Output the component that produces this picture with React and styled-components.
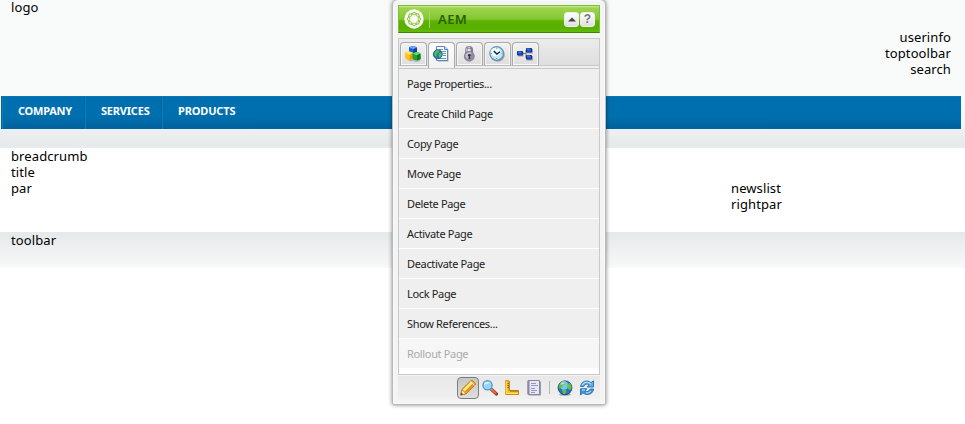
import React from "react";
import styled, { createGlobalStyle, css } from "styled-components";

const GlobalStyle = createGlobalStyle`
  * { box-sizing: border-box; }
  body {
    margin: 0;
    background: #fff;
    color: #000;
    font: 13px/16px "Noto Sans", "Open Sans", sans-serif;
    letter-spacing: 0.1px;
    overflow: hidden;
  }
`;

const Page = styled.div`
  position: relative;
  height: 424px;
  overflow: hidden;
`;

const Header = styled.header`
  height: 96px;
  padding: 0 14px 0 11px;
  background: #f9fbfa;
  display: flex;
  justify-content: space-between;
`;

const Logo = styled.div`
  line-height: 14px;
`;

const UserTools = styled.div`
  padding-top: 29px;
  text-align: right;
`;

const NavBand = styled.div`
  height: 52px;
  padding: 0 4px 0 1px;
  background: linear-gradient(#f9fbfa 0, #f4f5f6 28px, #eeeff1 33px, #e6eaeb 50px, #e9edee);
`;

const Nav = styled.nav`
  display: flex;
  height: 33px;
  border-top: 1px solid #0878b4;
  border-left: 1px solid #0767a4;
  background: linear-gradient(#006faf 0, #006fae 20px, #00629e 31px, #00649f);
`;

const NavItem = styled.a`
  width: ${(p) => p.$width}px;
  padding-left: 15px;
  border-left: 1px solid #0a7dbd;
  box-shadow: -1px 0 #0064a0;
  color: #fff;
  font: bold 11px/28px "Noto Sans", sans-serif;
  letter-spacing: ${(p) => p.$spacing}px;
`;

const Content = styled.main`
  height: 84px;
  padding-left: 11px;
  display: grid;
  grid-template-columns: 720px 1fr;
`;

const RightColumn = styled.aside`
  padding-top: 32px;
`;

const Footer = styled.footer`
  height: 36px;
  padding-left: 11px;
  background: linear-gradient(#e5e9ea, #eff1f2 55%, #f8f9f9);
`;

const Sidekick = styled.section`
  position: absolute;
  left: 392px;
  top: -1px;
  width: 214px;
  height: 406px;
  padding: 5px;
  border: 1px solid #b8b8b8;
  border-radius: 6px 6px 2px 2px;
  background: #f4f4f4;
  box-shadow: 0 0 4px rgba(0, 0, 0, 0.48), inset 0 0 0 1px #fafafa;
  display: flex;
  flex-direction: column;
  font: 11px/14px "Noto Sans", sans-serif;
  letter-spacing: 0;
`;

const TitleBar = styled.div`
  flex: none;
  height: 28px;
  padding: 0 4px 0 5px;
  border: 1px solid #7dbd42;
  border-bottom-color: #3f8300;
  background: linear-gradient(#caed91 0, #9ed44e 2px, #84c832 13px, #5db300 15px, #59ae00 22px, #62bd0a 100%);
  display: flex;
  align-items: center;
`;

const Title = styled.h1`
  flex: 1;
  margin: 0 0 0 5px;
  padding-left: 8px;
  border-left: 1px solid #a3d66a;
  color: #2a6100;
  font: 600 13px/17px "Noto Sans", sans-serif;
  letter-spacing: 0.4px;
`;

const TitleButton = styled.button`
  width: 15px;
  height: 15px;
  margin-left: 1px;
  padding: 0;
  border: 1px solid #efefef;
  border-radius: 3px;
  background: linear-gradient(#fff, #e0e0e0);
  color: #777;
  display: grid;
  place-items: center;
  font: bold 12px/13px "Liberation Sans", sans-serif;
`;

const Body = styled.div`
  flex: none;
  height: 337px;
  margin-top: 5px;
  border: 1px solid #c9c9c9;
  background: #fff;
`;

const TabStrip = styled.div`
  height: 30px;
  padding: 3px 1px 0;
  border-bottom: 1px solid #c9c9c9;
  background: linear-gradient(#ececec 0, #dedede 26px, #c9c9c9 26px, #c9c9c9 27px, #efefef 27px);
  display: flex;
  gap: 1px;
`;

const Tab = styled.button`
  width: 27px;
  height: 24px;
  padding: 0 2px 0 0;
  border: 1px solid #aaa;
  border-bottom: 1px solid #bbb;
  border-radius: 4px 4px 0 0;
  background: linear-gradient(#f2f2f2, #dedede);
  box-shadow: inset 0 0 0 1px #f7f7f7;
  display: grid;
  place-items: center;
  ${(p) =>
    p.$active &&
    css`
      height: 26px;
      padding-bottom: 3px;
      border-bottom: 0;
      background: linear-gradient(#fff, #f1f1f1);
      box-shadow: none;
    `}
`;

const MenuItem = styled.div`
  height: 30px;
  padding: 8px 0 0 8px;
  border-bottom: 1px solid #fff;
  background: ${(p) => (p.$disabled ? "#f6f6f6" : "#efefef")};
  color: ${(p) => (p.$disabled ? "#aaa" : "#222")};
  letter-spacing: -0.34px;
  white-space: nowrap;
`;

const ToolRow = styled.div`
  flex: none;
  height: 23px;
  margin-top: 1px;
  padding-right: 2px;
  background: linear-gradient(#e8e8e8, #f0f0f0);
  display: flex;
  justify-content: flex-end;
  align-items: center;
`;

const Tool = styled.button`
  width: 22px;
  height: 22px;
  padding: 0;
  border: 1px solid ${(p) => (p.$active ? "#7c7c7c" : "transparent")};
  border-radius: 4px;
  background: ${(p) => (p.$active ? "linear-gradient(#c6c6c6, #dedede)" : "none")};
  display: grid;
  place-items: center;
`;

const Divider = styled.i`
  width: 1px;
  height: 13px;
  margin: 0 4px;
  background: #b5b5b5;
`;

const Icon = styled.svg`
  display: block;
  overflow: visible;
`;

const Svg = ({ size = 16, children }) => (
  <Icon width={size} height={size} viewBox="0 0 16 16" fill="none">
    {children}
  </Icon>
);

const Cube = ({ x, y, top, left, right }) => (
  <g transform={`translate(${x} ${y})`}>
    <path d="M0 1.800Q0 .8 1 .8L4 0 7 .8Q8 1 8 2v4.500Q7.500 7.800 4 8.500.5 8 0 6.500Z" fill={left} />
    <path d="M.3 1.500 4 0l3.700 1.500L4.200 3.300Z" fill={top} />
    <path d="M4.500 3.300 8 1.800v4.500Q7 8 4.500 8.500Z" fill={right} />
  </g>
);

const CubesIcon = () => (
  <Svg>
    <path d="M2 13.500 9 11l7 1-1 3.300-4 .7-3-1-3 .2Z" fill="#999" opacity=".6" />
    <Cube x={4} y={0} top="#6ba4f4" left="#1f5fd8" right="#123fa6" />
    <Cube x={0.2} y={5.5} top="#ffe86b" left="#ffc40f" right="#e79a00" />
    <Cube x={7.5} y={6} top="#6edb62" left="#20a535" right="#0b7a20" />
  </Svg>
);

const PageIcon = () => (
  <Svg>
    <path d="M5 2h8.500L15.500 4v11.500H5Z" fill="#8a8a8a" opacity=".7" />
    <path d="M3.500.5h8.200L14.500 3v11.500h-11Z" fill="#f8fbff" stroke="#5f87b4" />
    <path d="M11.500.5V3.500h3" fill="#cddff2" stroke="#5f87b4" />
    <path d="M6 3.500h4M9 5.500h4M10 7.500h3M10 9.500h3M6 12.500h7" stroke="#6b92c0" />
    <circle cx="4.800" cy="8.200" r="4.500" fill="#2677bd" stroke="#165592" strokeWidth=".8" />
    <path d="m1.500 6.500 2-2.200 3 .2-.8 2-2 1-.2 3.500-2-1.500ZM6 7l2.500-.2.2 2.700-2 2.500-1-2Z" fill="#4fc23f" />
  </Svg>
);

const LockIcon = () => (
  <Svg>
    <path d="M5.300 7V4a2.800 2.800 0 0 1 5.600 0v3" stroke="#817c92" strokeWidth="2.400" />
    <path d="M5.300 6V4a2.800 2.800 0 0 1 4-2.500" stroke="#d2cedc" />
    <circle cx="8.300" cy="10.200" r="5" fill="#918ca2" stroke="#777286" strokeWidth=".7" />
    <path d="M4.300 9q2-3.500 6-2.500L8 13q-3 .5-3.700-4Z" fill="#c4c0d1" />
    <circle cx="8.300" cy="9.300" r="1.400" fill="#383341" />
    <path d="m8.300 9.300-1.200 3.500h2.400Z" fill="#383341" />
  </Svg>
);

const ClockIcon = () => (
  <Svg>
    <circle cx="8.800" cy="8.800" r="7" fill="#909090" opacity=".8" />
    <circle cx="7.700" cy="7.500" r="6.800" fill="#bde7f8" stroke="#6595ad" strokeWidth="1.300" />
    <ellipse cx="6.500" cy="6" rx="5" ry="4.200" fill="#eefbff" />
    <path d="m4.800 5 3 3L11 5.700" stroke="#17262f" strokeWidth="1.400" />
    <path d="M7.700 1.800v1M7.700 12v1M2 7.500h1M12.500 7.500h1" stroke="#599bb9" />
  </Svg>
);

const FlowIcon = () => (
  <Svg>
    <path d="M5 7.500h4V4h2M9 7.500V12h2" stroke="#777" />
    <path d="M1 6h5.500v4.500H1ZM9.500 3H16v4.500H9.500ZM9.500 10H16v4.500H9.500Z" fill="#777" opacity=".6" />
    <path d="M.5 5.500h5v3.500h-5ZM9.500 2.500h5V6h-5ZM9.500 9.500h5V13h-5Z" fill="#2056db" stroke="#142c84" />
    <path d="M1 6h3M10 3h3M10 10h3" stroke="#4587fa" />
  </Svg>
);

const PencilIcon = () => (
  <Svg>
    <path d="m.7 15 1.200-5.500L10.500 1q1.200-1.200 2.700.1l1.700 1.700q1.100 1.300-.2 2.500L6 13.800Z" fill="#f6b62a" stroke="#b97416" />
    <path d="m3 9.500 8-8 2 1.800-8 8Z" fill="#ffe97c" />
    <path d="m5 11.500 8-8 1.200 1.200L6 13Z" fill="#e98b18" />
    <path d="m.8 15 1.300-5L6 13.600Z" fill="#fff0ca" stroke="#b97416" strokeWidth=".6" />
    <path d="m.8 15 .6-2.500L3 14.300Z" fill="#3c301d" />
    <path d="m10.200 1.400 4 4" stroke="#fff5d5" />
  </Svg>
);

const SearchIcon = () => (
  <Svg>
    <path d="m9 9 5.500 5" stroke="#9a3b20" strokeWidth="3.200" strokeLinecap="round" />
    <path d="m9 9 5 4.500" stroke="#f26a36" strokeWidth="1.700" />
    <path d="m8.500 8.500 2 1.800" stroke="#999" strokeWidth="2" />
    <circle cx="5.500" cy="5.300" r="4.600" fill="#95d7fb" stroke="#5594c2" strokeWidth="1.300" />
    <path d="M2 5q.5-3 4-3l2 1Q5 3 2 5Z" fill="#edfaff" />
  </Svg>
);

const RulerIcon = () => (
  <Svg>
    <path d="M2 1.500h4v9h9V15H2Z" fill="#bb913e" />
    <path d="M1.500.8h3.500v9.700h9.500v3.700h-13Z" fill="#ffc52d" stroke="#c18612" />
    <path d="M2 1.500v12h12" stroke="#ffe36d" />
    <path d="M3.500 3.500H5M3.500 5.500H5M3.500 7.500H5M7 10.500v1.500M9 10.500v1.500M11 10.500v1.500M13 10.500v1.500" stroke="#8c5b00" />
  </Svg>
);

const FormIcon = () => (
  <Svg>
    <path d="M3 1.500h12V15.500H3Z" fill="#9a99a8" />
    <path d="M2 .5h11.500v14H2Z" fill="#e6e7f5" stroke="#89879f" />
    <path d="M2.500 1v13" stroke="#8987a8" strokeWidth="2" />
    <path d="M5 3.500h5M5 5.500h7M5 8.500h4M5 10.500h6M5 12.500h4" stroke="#9499c3" />
  </Svg>
);

const GlobeIcon = () => (
  <Svg>
    <ellipse cx="8" cy="14.500" rx="6" ry="1.300" fill="#aaa" />
    <circle cx="8" cy="7.800" r="6.900" fill="#2474c4" stroke="#174b80" />
    <circle cx="7" cy="5.500" r="4.400" fill="#7cc3f3" />
    <path d="m1.500 6 2.500-3.500 3-.2.5 2-2 1-.5 2-2 1-.5 1ZM5 9.500l3.500.3 1 2-2 2.700-1.500-1ZM10.500 4l2.500-1 1.700 4-1 3-2.700-1-.8-2Z" fill="#63c338" />
    <path d="m3 4.500 2-2 3 .1-2 2Z" fill="#c8ef92" />
  </Svg>
);

const RefreshIcon = () => (
  <Svg>
    <path d="M1.500 6.500Q2.500 1 8 1q2.500.2 4 1.700L14.500.8V7H8l2.200-2Q6.500 2.500 4.800 6.500Z" fill="#60b1e8" stroke="#276dab" strokeWidth=".9" />
    <path d="M14.700 9q-1.200 5.500-6.700 5.500-2.500-.2-4-1.700L1.500 15V8.800H8l-2.200 2q3.700 2.200 5.400-1.800Z" fill="#3f93da" stroke="#276dab" strokeWidth=".9" />
    <path d="M3 5Q4.500 2 8 2.200q2 .2 4 2M3 10h3M7 13q3 .4 5-2" stroke="#c4eaff" />
  </Svg>
);

const LogoIcon = () => (
  <Icon width="20" height="20" viewBox="0 0 20 20" fill="none">
    <circle cx="10" cy="10" r="9.700" fill="#fbfdf5" />
    {[0, 45, 90, 135, 180, 225, 270, 315].map((angle) => (
      <path
        key={angle}
        transform={`rotate(${angle} 10 10)`}
        d="M7.500 4.800 10 3.100l2.500 1.700L10 6.200Z"
        fill="#dff0c2"
        stroke="#79bd2c"
        strokeWidth=".8"
      />
    ))}
    <circle cx="10" cy="10" r="4.200" fill="#fbfdf5" stroke="#a5d36d" strokeWidth=".6" />
  </Icon>
);

const navItems = [
  ["COMPANY", 83, -0.25],
  ["SERVICES", 77, -0.2],
  ["PRODUCTS", 90, -0.15],
];
const tabs = [CubesIcon, PageIcon, LockIcon, ClockIcon, FlowIcon];
const menu = [
  "Page Properties...",
  "Create Child Page",
  "Copy Page",
  "Move Page",
  "Delete Page",
  "Activate Page",
  "Deactivate Page",
  "Lock Page",
  "Show References...",
  "Rollout Page",
];
const tools = [PencilIcon, SearchIcon, RulerIcon, FormIcon];

export default function App() {
  return (
    <>
      <GlobalStyle />
      <Page>
        <Header>
          <Logo>logo</Logo>
          <UserTools>
            <div>userinfo</div>
            <div>toptoolbar</div>
            <div>search</div>
          </UserTools>
        </Header>
        <NavBand>
          <Nav>
            {navItems.map(([label, width, spacing]) => (
              <NavItem key={label} $width={width} $spacing={spacing}>{label}</NavItem>
            ))}
          </Nav>
        </NavBand>
        <Content>
          <div>
            <div>breadcrumb</div>
            <div>title</div>
            <div>par</div>
          </div>
          <RightColumn>
            <div>newslist</div>
            <div>rightpar</div>
          </RightColumn>
        </Content>
        <Footer>toolbar</Footer>
        <Sidekick>
          <TitleBar>
            <LogoIcon />
            <Title>AEM</Title>
            <TitleButton aria-label="Collapse">
              <Icon width="8" height="5" viewBox="0 0 8 5"><path d="M0 4.500 4 .5l4 4Z" fill="#444" /></Icon>
            </TitleButton>
            <TitleButton>?</TitleButton>
          </TitleBar>
          <Body>
            <TabStrip>
              {tabs.map((Glyph, i) => <Tab key={i} $active={i === 1}><Glyph /></Tab>)}
            </TabStrip>
            {menu.map((label) => (
              <MenuItem key={label} $disabled={label === "Rollout Page"}>{label}</MenuItem>
            ))}
          </Body>
          <ToolRow>
            {tools.map((Glyph, i) => <Tool key={i} $active={i === 0}><Glyph /></Tool>)}
            <Divider />
            <Tool><GlobeIcon /></Tool>
            <Tool><RefreshIcon /></Tool>
          </ToolRow>
        </Sidekick>
      </Page>
    </>
  );
}
